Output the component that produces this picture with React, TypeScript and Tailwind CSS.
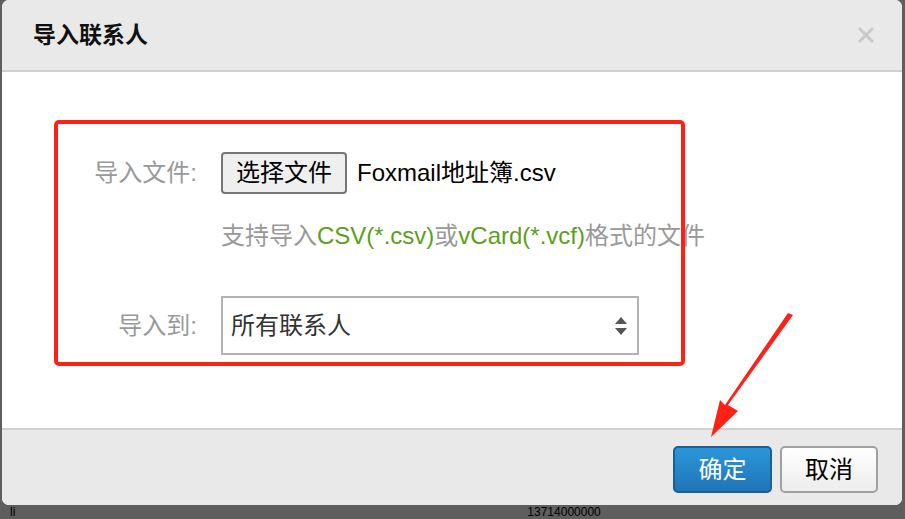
import React from "react";

const cjk = { fontFamily: '"Liberation Sans", "Noto Sans CJK SC", sans-serif' };

function CloseIcon() {
  return (
    <svg width="18" height="18" viewBox="0 0 18 18">
      <path d="M3 3 L15 15 M15 3 L3 15" stroke="#c9c9c9" strokeWidth="3" strokeLinecap="square" />
    </svg>
  );
}

function SortArrows() {
  return (
    <svg width="14" height="20" viewBox="0 0 14 20">
      <path d="M7 1 L13 8 L1 8 Z" fill="#555" />
      <path d="M1 12 L13 12 L7 19 Z" fill="#555" />
    </svg>
  );
}

export default function App() {
  return (
    <div className="relative w-[905px] h-[519px] overflow-hidden bg-[#5e5e5e]" style={cjk}>
      {/* Dialog */}
      <div className="ml-[2px] w-[900px] h-[505px] rounded-[7px] overflow-hidden bg-white flex flex-col">
        {/* Header */}
        <div className="h-[72px] shrink-0 bg-[#e9e9e9] border-b-2 border-[#cfcfcf] flex items-center justify-between pl-[31px] pr-[27px]">
          <h3 className="text-[23px] font-bold text-[#111]">导入联系人</h3>
          <CloseIcon />
        </div>

        {/* Body */}
        <div className="h-[356px] shrink-0 bg-white pt-[48px] pl-[52px]">
          <div className="relative w-[631px] h-[246px] pt-[32px]">
            <div className="flex items-center h-[42px]">
              <label className="w-[167px] pr-[24px] text-right text-[24px] text-[#999]">导入文件:</label>
              <button className="h-[42px] px-[13px] bg-[#efefef] border-2 border-[#767676] rounded-[4px] text-[24px] leading-none text-black">
                选择文件
              </button>
              <span className="ml-[10px] text-[24px] text-black">Foxmail地址簿.csv</span>
            </div>
            <div className="mt-[28px] ml-[167px] h-[28px] leading-[28px] text-[24px] text-[#999] whitespace-nowrap">
              支持导入<span className="text-[#5b9f1c]">CSV(*.csv)</span>或<span className="text-[#5b9f1c]">vCard(*.vcf)</span>格式的文件
            </div>
            <div className="mt-[46px] flex items-center">
              <label className="w-[167px] pr-[24px] text-right text-[24px] text-[#999]">导入到:</label>
              <div className="w-[418px] h-[59px] border-2 border-[#b3b3b3] flex items-center justify-between pl-[8px] pr-[9px]">
                <span className="text-[24px] text-[#333]">所有联系人</span>
                <SortArrows />
              </div>
            </div>
            {/* red annotation frame, drawn over the form */}
            <div className="absolute inset-0 border-4 border-[#ff2016] rounded-[5px] pointer-events-none" />
          </div>
        </div>

        {/* Footer */}
        <div className="flex-1 bg-[#e9e9e9] border-t-2 border-[#cfcfcf] flex justify-end items-start pt-[16px] pr-[24px] gap-[8px]">
          <button className="w-[99px] h-[47px] rounded-[5px] border-2 border-[#1b5f93] bg-gradient-to-b from-[#2c97da] to-[#1f75b7] text-white text-[24px]">
            确定
          </button>
          <button className="w-[98px] h-[47px] rounded-[5px] border-2 border-[#a0a0a0] bg-gradient-to-b from-white to-[#ececec] text-black text-[24px]">
            取消
          </button>
        </div>
      </div>

      {/* Page behind, peeking below the dialog */}
      <div className="flex h-[14px] text-[12px] leading-[14px] text-black">
        <span className="ml-[10px]">li</span>
        <span className="ml-[512px]">13714000000</span>
      </div>

      {/* Annotation arrow */}
      <svg className="absolute left-0 top-0 pointer-events-none" width="905" height="519">
        <path d="M793 315 L728 405 L738 411 L711 437 L720 400 L725 405 L788 313 Z" fill="#ff2016" />
      </svg>
    </div>
  );
}
